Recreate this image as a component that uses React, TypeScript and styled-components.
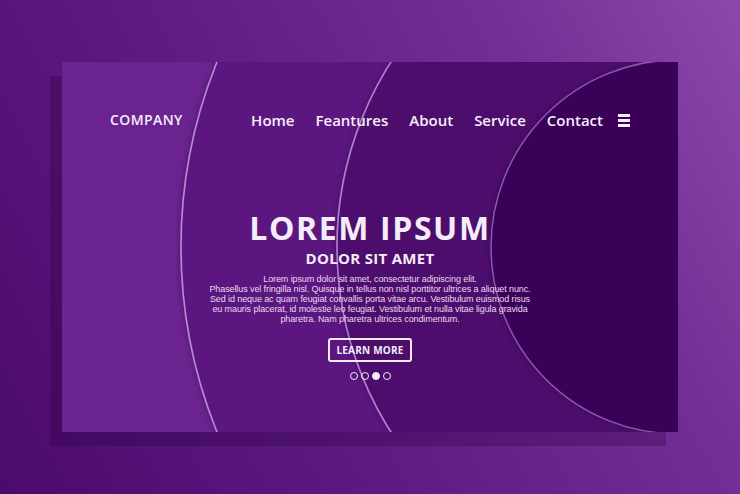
import React from "react";
import styled, { createGlobalStyle } from "styled-components";

const Global = createGlobalStyle`
  html, body { margin: 0; padding: 0; }
  body { width: 740px; height: 494px; overflow: hidden; }
`;

const Page = styled.div`
  width: 740px;
  height: 494px;
  box-sizing: border-box;
  padding: 62px 0 0 62px;
  background: linear-gradient(62deg, #4b0a6d 0%, #5f1a83 40%, #742f96 75%, #8c49ab 100%);
`;

const Card = styled.div`
  position: relative;
  width: 616px;
  height: 370px;
  overflow: hidden;
  background: #6b248f;
  box-shadow: -12px 14px 0 rgba(35, 0, 55, 0.26);
  display: flex;
  flex-direction: column;
`;

const Decor = styled.svg`
  position: absolute;
  inset: 0;
  width: 616px;
  height: 370px;
  pointer-events: none;
`;

const Header = styled.header`
  position: relative;
  display: flex;
  align-items: center;
  height: 20px;
  padding: 48px 48px 0 48px;
  font-family: "Open Sans", "Liberation Sans", sans-serif;
  color: #f6eefa;
`;

const Brand = styled.div`
  font-size: 14px;
  font-weight: 600;
  line-height: 20px;
  letter-spacing: 0.4px;
`;

const Nav = styled.nav`
  margin-left: auto;
  display: flex;
  align-items: center;
  gap: 21px;
`;

const NavLink = styled.a`
  font-size: 15px;
  font-weight: 600;
  line-height: 20px;
  color: #f6eefa;
  text-decoration: none;
`;

const Burger = styled.div`
  display: flex;
  flex-direction: column;
  gap: 2px;
  width: 12px;
  margin-left: -6px;
  & > span {
    display: block;
    height: 3px;
    background: #f6eefa;
  }
`;

const Hero = styled.section`
  position: relative;
  display: flex;
  flex-direction: column;
  align-items: center;
  margin-top: 82px;
  font-family: "Open Sans", "Liberation Sans", sans-serif;
  color: #f4ecf8;
`;

const Title = styled.h1`
  margin: 0;
  font-size: 32px;
  line-height: 32px;
  font-weight: 700;
  letter-spacing: 1.6px;
`;

const Subtitle = styled.h2`
  margin: 5px 0 0;
  font-size: 15px;
  line-height: 18px;
  font-weight: 700;
  letter-spacing: 0.3px;
`;

const Body = styled.p`
  margin: 7px 0 0;
  font-family: "Liberation Sans", Arial, sans-serif;
  font-size: 9px;
  line-height: 10px;
  text-align: center;
  white-space: nowrap;
  color: #e7dbef;
  letter-spacing: -0.1px;
`;

const Button = styled.button`
  margin-top: 14px;
  box-sizing: border-box;
  width: 84px;
  height: 24px;
  padding: 0;
  border: 2px solid #f4ecf8;
  border-radius: 3px;
  background: transparent;
  color: #f4ecf8;
  font-family: "Open Sans", "Liberation Sans", sans-serif;
  font-size: 10px;
  font-weight: 700;
  letter-spacing: 0.2px;
`;

const Dots = styled.div`
  margin-top: 10px;
  display: flex;
  gap: 3px;
`;

const Dot = styled.span<{ $active?: boolean }>`
  box-sizing: border-box;
  width: 8px;
  height: 8px;
  border-radius: 50%;
  border: 1.4px solid #f4ecf8;
  background: ${(p) => (p.$active ? "#f4ecf8" : "transparent")};
`;

const lines = [
  "Lorem ipsum dolor sit amet, consectetur adipiscing elit.",
  "Phasellus vel fringilla nisl. Quisque in tellus non nisl porttitor ultrices a aliquet nunc.",
  "Sed id neque ac quam feugiat convallis porta vitae arcu. Vestibulum euismod risus",
  "eu mauris placerat, id molestie leo feugiat. Vestibulum et nulla vitae ligula gravida",
  "pharetra. Nam pharetra ultrices condimentum.",
];

export default function App() {
  return (
    <>
      <Global />
      <Page>
        <Card>
          <Decor viewBox="0 0 616 370">
            <defs>
              <filter id="sh" x="-10%" y="-10%" width="120%" height="120%">
                <feDropShadow dx="-2" dy="0" stdDeviation="2.5" floodColor="#2a0040" floodOpacity="0.3" />
              </filter>
            </defs>
            <circle cx="612" cy="185" r="493" fill="#5c1780" stroke="#b98ad6" strokeWidth="1.6" filter="url(#sh)" />
            <circle cx="619" cy="185" r="344" fill="#4d0a6c" stroke="#b080d0" strokeWidth="1.6" filter="url(#sh)" />
            <circle cx="616" cy="185" r="187" fill="#3a0459" stroke="#8a5aae" strokeWidth="1.4" filter="url(#sh)" />
          </Decor>
          <Header>
            <Brand>COMPANY</Brand>
            <Nav>
              <NavLink>Home</NavLink>
              <NavLink>Feantures</NavLink>
              <NavLink>About</NavLink>
              <NavLink>Service</NavLink>
              <NavLink>Contact</NavLink>
              <Burger>
                <span />
                <span />
                <span />
              </Burger>
            </Nav>
          </Header>
          <Hero>
            <Title>LOREM IPSUM</Title>
            <Subtitle>DOLOR SIT AMET</Subtitle>
            <Body>
              {lines.map((l, i) => (
                <React.Fragment key={i}>
                  {l}
                  {i < lines.length - 1 && <br />}
                </React.Fragment>
              ))}
            </Body>
            <Button>LEARN MORE</Button>
            <Dots>
              <Dot />
              <Dot />
              <Dot $active />
              <Dot />
            </Dots>
          </Hero>
        </Card>
      </Page>
    </>
  );
}
